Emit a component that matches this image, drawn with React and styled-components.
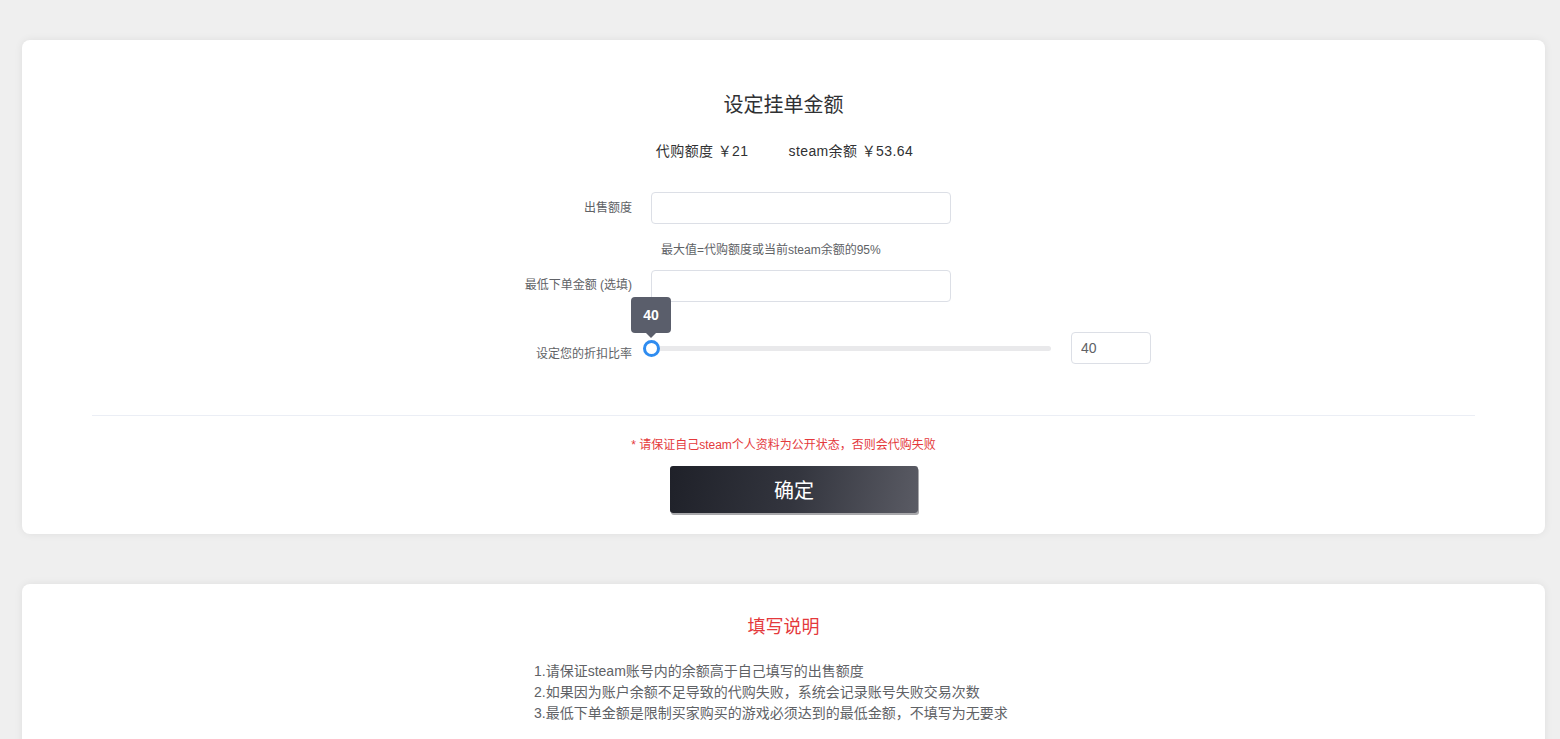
import React from "react";
import styled, { createGlobalStyle } from "styled-components";

const Global = createGlobalStyle`
  html, body { margin: 0; padding: 0; }
  body {
    background: #efefef;
    font-family: "Liberation Sans", "Noto Sans CJK SC", sans-serif;
    color: #303133;
  }
  * { box-sizing: border-box; }
`;

const Page = styled.div`
  padding: 40px 15px 20px 22px;
  display: flex;
  flex-direction: column;
  gap: 50px;
`;

const Card = styled.div`
  background: #fff;
  border-radius: 8px;
  box-shadow: 0 0 8px rgba(0, 0, 0, 0.07);
  padding: 0 70px;
  display: flex;
  flex-direction: column;
`;

const Title = styled.h2`
  margin: 53px 0 0;
  font-size: 20px;
  line-height: 24px;
  font-weight: 400;
  text-align: center;
  color: #303133;
`;

const Stats = styled.div`
  margin-top: 24px;
  display: flex;
  justify-content: center;
  gap: 40px;
  font-size: 14px;
  line-height: 20px;
  color: #303133;
  padding-left: 2px;
  letter-spacing: 0.4px;
`;

const Form = styled.div`
  padding-left: 400px;
  display: flex;
  flex-direction: column;
`;

const Row = styled.div`
  display: flex;
  align-items: center;
  margin-top: ${(p) => p.$mt || 0}px;
`;

const Label = styled.label`
  width: 159px;
  padding-right: 19px;
  text-align: right;
  font-size: 12px;
  line-height: 16px;
  color: #606266;
  flex-shrink: 0;
  transform: translateY(${(p) => p.$dy || 0}px);
`;

const Input = styled.input`
  width: ${(p) => p.$w || 300}px;
  height: 32px;
  border: 1px solid #dcdfe6;
  border-radius: 4px;
  padding: 0 9px;
  font-size: 14px;
  font-family: inherit;
  color: #606266;
  outline: none;
  background: #fff;
`;

const Help = styled.div`
  margin: 18px 0 0 169px;
  font-size: 12px;
  line-height: 16px;
  color: #606266;
`;

const SliderWrap = styled.div`
  position: relative;
  width: 400px;
  height: 32px;
  display: flex;
  align-items: center;
  margin-right: 20px;
`;

const Track = styled.div`
  width: 100%;
  height: 5px;
  border-radius: 3px;
  background: #e9e9eb;
`;

const Thumb = styled.div`
  position: absolute;
  left: -8px;
  top: 8px;
  width: 17px;
  height: 17px;
  border-radius: 50%;
  border: 3px solid #2f8cf0;
  background: #fff;
`;

const Tip = styled.div`
  position: absolute;
  left: -20px;
  top: -35px;
  width: 40px;
  height: 36px;
  border-radius: 4px;
  background: #5a5e6b;
  color: #fff;
  font-size: 14px;
  font-weight: 700;
  display: flex;
  align-items: center;
  justify-content: center;
  &::after {
    content: "";
    position: absolute;
    left: 15px;
    bottom: -5px;
    border-left: 5px solid transparent;
    border-right: 5px solid transparent;
    border-top: 5px solid #5a5e6b;
  }
`;

const Divider = styled.hr`
  margin: 51px 0 0;
  border: none;
  border-top: 1px solid #ebeef5;
`;

const Notice = styled.div`
  margin-top: 21px;
  text-align: center;
  font-size: 12px;
  line-height: 16px;
  color: #e4393c;
`;

const Button = styled.button`
  align-self: center;
  margin: 13px 0 21px 21px;
  width: 248px;
  height: 47px;
  border: none;
  border-radius: 3px;
  background: linear-gradient(100deg, #1f2129 0%, #33353e 50%, #5a5b64 100%);
  box-shadow: 1px 2px 0 #a8a8ab;
  color: #fff;
  font-size: 20px;
  font-family: "Noto Sans CJK SC", sans-serif;
  line-height: 1;
  cursor: pointer;
`;

const RedTitle = styled.h3`
  margin: 31px 0 0;
  font-size: 18px;
  line-height: 24px;
  font-weight: 400;
  text-align: center;
  color: #e4393c;
`;

const List = styled.div`
  margin: 22px 0 60px 442px;
  font-size: 14px;
  line-height: 21px;
  color: #606266;
`;

export default function App() {
  return (
    <>
      <Global />
      <Page>
        <Card>
          <Title>设定挂单金额</Title>
          <Stats>
            <span>代购额度 ￥21</span>
            <span>steam余额 ￥53.64</span>
          </Stats>
          <Form>
            <Row $mt={31}>
              <Label>出售额度</Label>
              <Input />
            </Row>
            <Help>最大值=代购额度或当前steam余额的95%</Help>
            <Row $mt={12}>
              <Label $dy={-1}>最低下单金额 (选填)</Label>
              <Input />
            </Row>
            <Row $mt={30}>
              <Label $dy={6}>设定您的折扣比率</Label>
              <SliderWrap>
                <Track />
                <Thumb />
                <Tip>40</Tip>
              </SliderWrap>
              <Input $w={80} defaultValue="40" />
            </Row>
          </Form>
          <Divider />
          <Notice>* 请保证自己steam个人资料为公开状态，否则会代购失败</Notice>
          <Button>确定</Button>
        </Card>
        <Card>
          <RedTitle>填写说明</RedTitle>
          <List>
            <div>1.请保证steam账号内的余额高于自己填写的出售额度</div>
            <div>2.如果因为账户余额不足导致的代购失败，系统会记录账号失败交易次数</div>
            <div>3.最低下单金额是限制买家购买的游戏必须达到的最低金额，不填写为无要求</div>
          </List>
        </Card>
      </Page>
    </>
  );
}
